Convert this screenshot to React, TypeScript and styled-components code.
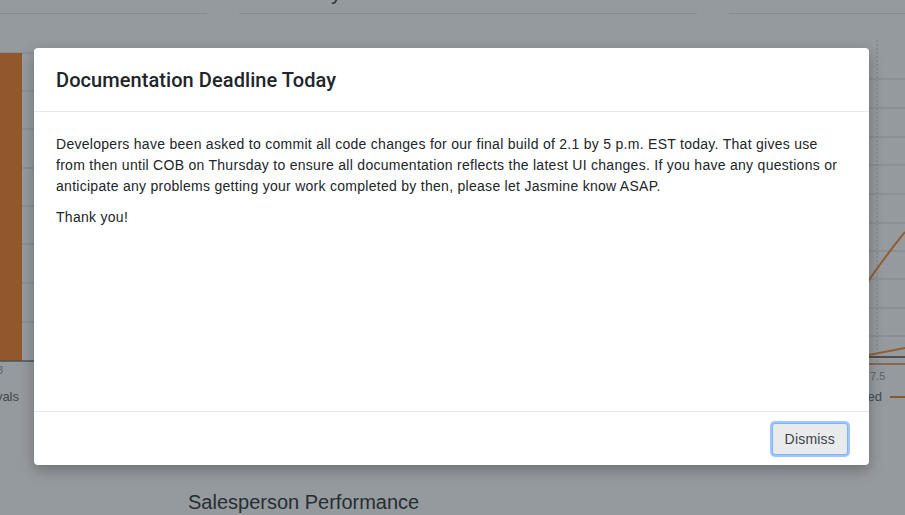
import React from "react";
import styled, { createGlobalStyle } from "styled-components";

const Global = createGlobalStyle`
  html, body { margin: 0; padding: 0; background: #ffffff; }
  body { font-family: "Liberation Sans", Arial, sans-serif; color: #212529; }
  * { box-sizing: border-box; }
`;

const Page = styled.div`
  position: relative;
  width: 905px;
  height: 515px;
  overflow: hidden;
  background: #ffffff;
`;

const Dashboard = styled.div`
  display: flex;
  flex-direction: column;
`;

const TopRow = styled.div`
  display: grid;
  grid-template-columns: 207px 458px 1fr;
  column-gap: 32px;
  height: 14px;
`;

const TopCell = styled.div`
  border-bottom: 1px solid #dcdfe3;
  height: 14px;
  overflow: visible;
`;

const CutTitle = styled.div`
  margin-top: -17px;
  padding-left: 37px;
  font-size: 20px;
  line-height: 20px;
  color: #212529;
  white-space: nowrap;
`;

const ChartsRow = styled.div`
  display: grid;
  grid-template-columns: 440px 1fr;
  column-gap: 15px;
  margin-top: 26px;
  height: 400px;
`;

const ChartCard = styled.div`
  overflow: hidden;
  height: 400px;
`;

const SectionTitle = styled.h2`
  margin: 50px 0 0;
  padding-left: 188px;
  font-size: 20px;
  line-height: 24px;
  font-weight: 400;
  color: #212529;
`;

const Backdrop = styled.div`
  position: absolute;
  inset: 0;
  background: rgba(43, 53, 61, 0.5);
  display: flex;
  align-items: flex-start;
  padding: 48px 0 0 34px;
`;

const Modal = styled.div`
  width: 835px;
  height: 417px;
  background: #ffffff;
  border-radius: 4px;
  box-shadow: 0 5px 14px rgba(0, 0, 0, 0.28);
  display: flex;
  flex-direction: column;
`;

const ModalHeader = styled.div`
  height: 64px;
  display: flex;
  align-items: center;
  padding: 0 22px;
  border-bottom: 1px solid #e6e8eb;
`;

const ModalTitle = styled.h1`
  margin: 0;
  font-family: Roboto, "Liberation Sans", Arial, sans-serif;
  font-size: 20px;
  font-weight: 500;
  line-height: 24px;
  letter-spacing: 0.07px;
  color: #212529;
`;

const ModalBody = styled.div`
  flex: 1;
  padding: 22px 22px 0;
`;

const Paragraph = styled.p`
  margin: 0 0 10px;
  font-size: 14px;
  line-height: 21px;
  letter-spacing: 0.28px;
  color: #212529;
`;

const ModalFooter = styled.div`
  height: 54px;
  border-top: 1px solid #e6e8eb;
  display: flex;
  align-items: center;
  justify-content: flex-end;
  padding: 0 21px 0 0;
`;

const Button = styled.button`
  height: 32px;
  padding: 0 12px;
  border: 1px solid #7fb3f5;
  border-radius: 3px;
  background: #e9eaec;
  color: #3d4248;
  font-family: inherit;
  font-size: 14px;
  letter-spacing: 0.2px;
  box-shadow: 0 0 0 2px rgba(120, 175, 250, 0.7);
  cursor: pointer;
`;

const LeftChart = () => (
  <svg width="440" height="400" viewBox="0 0 440 400">
    {[13, 51, 89, 128, 166, 204, 243, 282].map((y) => (
      <line key={y} x1="0" x2="440" y1={y} y2={y} stroke="#d3d6da" strokeWidth="1" />
    ))}
    <rect x="-5" y="13" width="27" height="308" fill="#f97a19" />
    <line x1="0" x2="440" y1="321" y2="321" stroke="#6b6f74" strokeWidth="1.5" />
    <text x="-3" y="334" fontSize="11" fill="#8a8f94" fontFamily="Liberation Sans, Arial, sans-serif">3</text>
    <text x="19" y="361" fontSize="13" textAnchor="end" fill="#555a60" fontFamily="Liberation Sans, Arial, sans-serif">Approvals</text>
  </svg>
);

const RightChart = () => (
  <svg width="450" height="400" viewBox="0 0 450 400">
    {[39, 68, 97, 125, 154, 183, 211, 239, 268, 296].map((y) => (
      <line key={y} x1="0" x2="450" y1={y} y2={y} stroke="#d3d6da" strokeWidth="1" />
    ))}
    <line x1="422" x2="422" y1="0" y2="324" stroke="#c9ccd0" strokeWidth="1" strokeDasharray="2 2" />
    <path d="M 360 300 Q 400 272 414 240 Q 432 214 450 192" fill="none" stroke="#f5862a" strokeWidth="2" />
    <path d="M 380 318 L 414 315 L 450 308" fill="none" stroke="#f5862a" strokeWidth="2" />
    <line x1="380" x2="450" y1="317" y2="317" stroke="#4a3a30" strokeWidth="1.5" />
    <line x1="0" x2="450" y1="324" y2="324" stroke="#d97a30" strokeWidth="1.5" />
    <text x="415" y="340" fontSize="11" fill="#8a8f94" fontFamily="Liberation Sans, Arial, sans-serif">7.5</text>
    <text x="427" y="361" fontSize="13" textAnchor="end" fill="#555a60" fontFamily="Liberation Sans, Arial, sans-serif">Completed</text>
    <line x1="435" x2="460" y1="357" y2="357" stroke="#e07a28" strokeWidth="2" />
  </svg>
);

export default function App() {
  return (
    <>
      <Global />
      <Page>
        <Dashboard>
          <TopRow>
            <TopCell />
            <TopCell>
              <CutTitle>Weekly</CutTitle>
            </TopCell>
            <TopCell />
          </TopRow>
          <ChartsRow>
            <ChartCard>
              <LeftChart />
            </ChartCard>
            <ChartCard>
              <RightChart />
            </ChartCard>
          </ChartsRow>
          <SectionTitle>Salesperson Performance</SectionTitle>
        </Dashboard>
        <Backdrop>
          <Modal role="dialog" aria-modal="true">
            <ModalHeader>
              <ModalTitle>Documentation Deadline Today</ModalTitle>
            </ModalHeader>
            <ModalBody>
              <Paragraph>
                Developers have been asked to commit all code changes for our final build of 2.1 by 5 p.m. EST today. That gives use from then until COB on Thursday to ensure all documentation reflects the latest UI changes. If you have any questions or anticipate any problems getting your work completed by then, please let Jasmine know ASAP.
              </Paragraph>
              <Paragraph>Thank you!</Paragraph>
            </ModalBody>
            <ModalFooter>
              <Button>Dismiss</Button>
            </ModalFooter>
          </Modal>
        </Backdrop>
      </Page>
    </>
  );
}
